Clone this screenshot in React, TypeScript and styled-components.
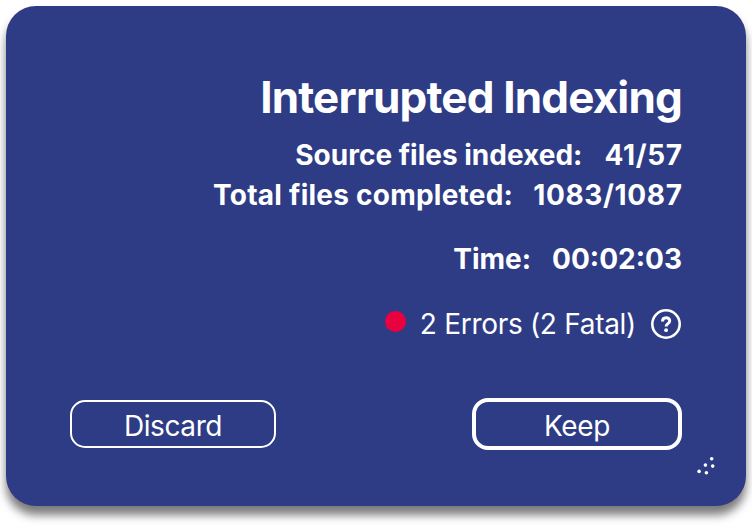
import React from "react";
import styled, { createGlobalStyle } from "styled-components";

const GlobalStyle = createGlobalStyle`
  *, *::before, *::after { box-sizing: border-box; }
  body { margin: 0; background: #fff; font-family: Inter, sans-serif; overflow: hidden; }
`;
const Page = styled.main`
  width: 752px;
  height: 526px;
  padding: 6px;
  overflow: hidden;
`;
const Dialog = styled.section`
  position: relative;
  width: 740px;
  height: 500px;
  padding: 65px 64px 0;
  border-radius: 30px;
  background: #2e3c85;
  color: #fff;
  box-shadow: 0 9px 10px rgba(0, 0, 0, 0.52);
`;
const Title = styled.h1`
  margin: 0;
  height: 52px;
  font-size: 44px;
  line-height: 52px;
  font-weight: 700;
  letter-spacing: -0.83px;
  text-align: right;
  white-space: nowrap;
`;
const Stat = styled.div<{ $top?: number; $gap: number }>`
  display: flex;
  justify-content: flex-end;
  gap: ${(p) => p.$gap}px;
  height: 40px;
  margin-top: ${(p) => p.$top ?? 0}px;
  font-size: 28px;
  line-height: 40px;
  font-weight: 700;
  white-space: nowrap;
`;
const Label = styled.span<{ $tracking?: number }>`
  letter-spacing: ${(p) => p.$tracking ?? 0}px;
`;
const Value = styled.span<{ $tracking?: number }>`
  letter-spacing: ${(p) => p.$tracking ?? 0}px;
  margin-right: ${(p) => -(p.$tracking ?? 0)}px;
`;
const Errors = styled.div`
  display: flex;
  align-items: center;
  justify-content: flex-end;
  height: 40px;
  margin-top: 25px;
  font-size: 28px;
  letter-spacing: -0.3px;
  white-space: nowrap;
`;
const Dot = styled.span`
  width: 21px;
  height: 21px;
  margin: -5px 14px 0 0;
  border-radius: 50%;
  background: #e9003e;
`;
const HelpIcon = styled.svg`
  margin-left: 14px;
`;
const Actions = styled.div`
  display: flex;
  justify-content: space-between;
  align-items: center;
  height: 52px;
  margin-top: 54px;
`;
const Button = styled.button<{ $primary?: boolean }>`
  width: ${(p) => (p.$primary ? 210 : 206)}px;
  height: ${(p) => (p.$primary ? 52 : 48)}px;
  padding: 3px 0 0;
  border: ${(p) => (p.$primary ? 4 : 2)}px solid #fff;
  border-radius: ${(p) => (p.$primary ? 16 : 15)}px;
  background: transparent;
  color: #fff;
  font: 400 28px Inter, sans-serif;
  letter-spacing: -0.4px;
`;
const Grip = styled.svg`
  position: absolute;
  right: 30px;
  bottom: 30px;
`;

export default function App() {
  return (
    <Page>
      <GlobalStyle />
      <Dialog>
        <Title>Interrupted Indexing</Title>
        <Stat $top={12} $gap={22}>
          <Label>Source files indexed:</Label>
          <Value $tracking={0.65}>41/57</Value>
        </Stat>
        <Stat $gap={20}>
          <Label $tracking={0.24}>Total files completed:</Label>
          <Value $tracking={0.65}>1083/1087</Value>
        </Stat>
        <Stat $top={24} $gap={21}>
          <Label>Time:</Label>
          <Value>00:02:03</Value>
        </Stat>
        <Errors>
          <Dot />
          <span>2 Errors (2 Fatal)</span>
          <HelpIcon width="32" height="32" viewBox="0 0 32 32" fill="none" stroke="#fff">
            <circle cx="16" cy="16" r="13.7" strokeWidth="2.6" />
            <path d="M12.5 13.4c0-4.8 7.2-4.7 7.2-.6 0 2.9-3.6 2.7-3.6 5.6" strokeWidth="3" />
            <circle cx="16.1" cy="22.2" r="1.9" fill="#fff" stroke="none" />
          </HelpIcon>
        </Errors>
        <Actions>
          <Button>Discard</Button>
          <Button $primary>Keep</Button>
        </Actions>
        <Grip width="20" height="20" viewBox="0 0 20 20" fill="#fff">
          <circle cx="15.7" cy="2.8" r="1.8" />
          <circle cx="9.4" cy="9.1" r="1.8" />
          <circle cx="16.7" cy="10.1" r="1.8" />
          <circle cx="3.1" cy="15.4" r="1.8" />
          <circle cx="10.4" cy="16.7" r="1.8" />
        </Grip>
      </Dialog>
    </Page>
  );
}
